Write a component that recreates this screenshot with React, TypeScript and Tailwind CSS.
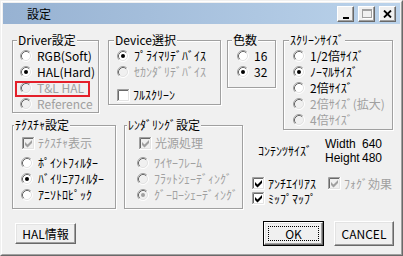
import React from 'react';

// classic win32 dialog, half-width kana labels

const FONT = { fontFamily: '"Noto Sans CJK JP", "Liberation Sans", sans-serif' };
const LATIN = { fontFamily: '"Liberation Sans", "Noto Sans CJK JP", sans-serif' };

function Radio({ on, off }: { on?: boolean; off?: boolean }) {
  return (
    <svg width="12" height="12" viewBox="0 0 12 12" className="shrink-0">
      <circle cx="6" cy="6" r="5" fill={off ? '#f0f0f0' : '#fff'} />
      <path d="M2.11 9.89A5.5 5.5 0 0 1 9.89 2.11" stroke="#a0a0a0" fill="none" />
      <path d="M9.89 2.11A5.5 5.5 0 0 1 2.11 9.89" stroke="#fff" fill="none" />
      <path d="M2.82 9.18A4.5 4.5 0 0 1 9.18 2.82" stroke="#696969" fill="none" />
      <path d="M9.18 2.82A4.5 4.5 0 0 1 2.82 9.18" stroke="#e3e3e3" fill="none" />
      {on && <circle cx="6" cy="6" r="2" fill={off ? '#a0a0a0' : '#000'} />}
    </svg>
  );
}

function Check({ on, off }: { on?: boolean; off?: boolean }) {
  return (
    <svg width="13" height="13" viewBox="0 0 13 13" className="shrink-0">
      <rect x="1" y="1" width="11" height="11" fill={off ? '#f0f0f0' : '#fff'} />
      <path d="M0.5 12 V0.5 H12" stroke="#a0a0a0" fill="none" />
      <path d="M1.5 11 V1.5 H11" stroke="#696969" fill="none" />
      <path d="M0 12.5 H12.5 V0" stroke="#fff" fill="none" />
      <path d="M1 11.5 H11.5 V1" stroke="#e3e3e3" fill="none" />
      {on && <polygon points="3,5 5.5,7.5 10,3 10,6 5.5,10.5 3,8" fill={off ? '#a0a0a0' : '#000'} />}
    </svg>
  );
}

function RadioRow({ label, on, off }: { label: string; on?: boolean; off?: boolean }) {
  return (
    <div className={`flex h-[16px] items-center gap-[5px] whitespace-nowrap ${off ? 'text-[#a0a0a0]' : 'text-black'}`}>
      <Radio on={on} off={off} />
      <span className="leading-[14px]">{label}</span>
    </div>
  );
}

function CheckRow({ label, on, off, className = '' }: { label: string; on?: boolean; off?: boolean; className?: string }) {
  return (
    <div className={`flex h-[16px] items-center gap-[3px] whitespace-nowrap ${off ? 'text-[#a0a0a0]' : 'text-black'} ${className}`}>
      <Check on={on} off={off} />
      <span className="leading-[14px]">{label}</span>
    </div>
  );
}

function Group({ title, className, titleLeft = 'left-[4px]', children }: { title: string; className: string; titleLeft?: string; children: React.ReactNode }) {
  return (
    <div className={`relative shrink-0 border border-[#a0a0a0] shadow-[inset_1px_1px_0_#fff,1px_1px_0_#fff] ${className}`}>
      <span className={`absolute top-[-8px] ${titleLeft} bg-[#f0f0f0] px-[1px] leading-[14px] whitespace-nowrap`}>{title}</span>
      {children}
    </div>
  );
}

function Button({ label, className = '', isDefault }: { label: string; className?: string; isDefault?: boolean }) {
  const face = (
    <div className="relative flex h-full w-full items-center justify-center border border-t-white border-l-white border-r-[#696969] border-b-[#696969] bg-[#f0f0f0] shadow-[inset_-1px_-1px_0_#a0a0a0,inset_1px_1px_0_#e3e3e3]">
      {isDefault && <span className="absolute inset-[3px] border border-dotted border-black" />}
      <span className="relative leading-[14px]">{label}</span>
    </div>
  );
  if (isDefault) return <div className={`border border-black ${className}`}>{face}</div>;
  return <div className={className}>{face}</div>;
}

function CaptionButton({ children }: { children: React.ReactNode }) {
  return (
    <div className="flex h-[16px] w-[17px] items-center justify-center border border-t-white border-l-white border-r-[#696969] border-b-[#696969] bg-[#f0f0f0] shadow-[inset_-1px_-1px_0_#a0a0a0]">
      {children}
    </div>
  );
}

export default function App() {
  return (
    <div className="text-[12px] text-black" style={FONT}>
      <div className="relative h-[256px] w-[403px] border border-t-[#f0f0f0] border-l-[#f0f0f0] border-r-[#696969] border-b-[#696969] bg-[#f0f0f0]">
        <div className="flex h-full w-full flex-col border border-t-white border-l-white border-r-[#a0a0a0] border-b-[#a0a0a0] p-[1px]">
          {/* title bar */}
          <div className="flex h-[21px] shrink-0 items-center bg-gradient-to-r from-[#97b2d2] to-[#bbd3eb] pl-[24px] pr-[4px]">
            <span className="text-[12px] leading-[14px] text-black">設定</span>
            <div className="ml-auto flex items-center gap-[4px]">
              <CaptionButton>
                <span className="mt-[8px] h-[2px] w-[6px] bg-black" />
              </CaptionButton>
              <CaptionButton>
                <span className="h-[9px] w-[10px] border border-t-2 border-[#a0a0a0] shadow-[1px_1px_0_#fff]" />
              </CaptionButton>
              <CaptionButton>
                <svg width="9" height="8" viewBox="0 0 9 8">
                  <path d="M1 0.5 L8 7.5 M8 0.5 L1 7.5" stroke="#000" strokeWidth="1.8" />
                </svg>
              </CaptionButton>
            </div>
          </div>

          {/* client */}
          <div className="flex flex-1 flex-col pl-[9px] pr-[6px] pt-[16px]">
            <div className="flex items-start">
              <Group title="Driver設定" className="w-[87px] pl-[7px] pt-[7px]">
                <RadioRow label="RGB(Soft)" />
                <RadioRow label="HAL(Hard)" on />
                <RadioRow label="T&L HAL" off />
                <RadioRow label="Reference" off />
              </Group>
              <Group title="Device選択" titleLeft="left-[5px]" className="ml-[9px] w-[113px] pl-[8px] pt-[7px] pb-[1px]">
                <RadioRow label="ﾌﾟﾗｲﾏﾘﾃﾞﾊﾞｲｽ" on />
                <RadioRow label="ｾｶﾝﾀﾞﾘﾃﾞﾊﾞｲｽ" off />
                <CheckRow label="ﾌﾙｽｸﾘｰﾝ" className="mt-[7px]" />
              </Group>
              <Group title="色数" className="ml-[6px] w-[49px] pl-[9px] pt-[7px] pb-[7px]">
                <RadioRow label="16" />
                <RadioRow label="32" on />
              </Group>
              <Group title="ｽｸﾘｰﾝｻｲｽﾞ" titleLeft="left-[5px]" className="ml-[7px] w-[110px] pl-[9px] pt-[7px] pb-[1px]">
                <RadioRow label="1/2倍ｻｲｽﾞ" />
                <RadioRow label="ﾉｰﾏﾙｻｲｽﾞ" on />
                <RadioRow label="2倍ｻｲｽﾞ" />
                <RadioRow label="2倍ｻｲｽﾞ(拡大)" off />
                <RadioRow label="4倍ｻｲｽﾞ" off />
              </Group>
            </div>

            <div className="mt-[-5px] flex items-start">
              <Group title="ﾃｸｽﾁｬ設定" titleLeft="left-[1px]" className="w-[104px] pl-[8px] pt-[9px] pb-[5px]">
                <CheckRow label="ﾃｸｽﾁｬ表示" on off className="pl-[1px]" />
                <div className="mt-[4px]">
                  <RadioRow label="ﾎﾟｲﾝﾄﾌｨﾙﾀｰ" />
                  <RadioRow label="ﾊﾞｲﾘﾆｱﾌｨﾙﾀｰ" on />
                  <RadioRow label="ｱﾆｿﾄﾛﾋﾟｯｸ" />
                </div>
              </Group>
              <Group title="ﾚﾝﾀﾞﾘﾝｸﾞ設定" titleLeft="left-[2px]" className="ml-[8px] w-[119px] pl-[12px] pt-[9px] pb-[5px]">
                <CheckRow label="光源処理" on off className="pl-[2px]" />
                <div className="mt-[4px]">
                  <RadioRow label="ﾜｲﾔｰﾌﾚｰﾑ" off />
                  <RadioRow label="ﾌﾗｯﾄｼｪｰﾃﾞｨﾝｸﾞ" off />
                  <RadioRow label="ｸﾞｰﾛｰｼｪｰﾃﾞｨﾝｸﾞ" on off />
                </div>
              </Group>
              <div className="ml-[9px] flex flex-1 flex-col">
                <div className="mt-[12px] flex items-center">
                  <span className="ml-[6px] w-[67px] whitespace-nowrap leading-[14px]">ｺﾝﾃﾝﾂｻｲｽﾞ</span>
                  <div className="grid grid-cols-[37px_auto] text-[12px] leading-[14px] whitespace-nowrap" style={LATIN}>
                    <span>Width</span>
                    <span>640</span>
                    <span>Height</span>
                    <span>480</span>
                  </div>
                </div>
                <div className="mt-[11px] flex h-[15px] items-center">
                  <Check on />
                  <span className="ml-[3px] w-[60px] whitespace-nowrap leading-[14px]">ｱﾝﾁｴｲﾘｱｽ</span>
                  <div className="flex items-center gap-[3px] whitespace-nowrap text-[#a0a0a0]">
                    <Check on off />
                    <span className="leading-[14px]">ﾌｫｸﾞ効果</span>
                  </div>
                </div>
                <div className="flex h-[15px] items-center">
                  <Check on />
                  <span className="ml-[3px] whitespace-nowrap leading-[14px]">ﾐｯﾌﾟﾏｯﾌﾟ</span>
                </div>
              </div>
            </div>

            <div className="mt-[12px] flex h-[25px] items-center">
              <Button label="HAL情報" className="ml-[3px] h-[21px] w-[61px]" />
              <Button label="OK" isDefault className="ml-auto h-[25px] w-[61px]" />
              <Button label="CANCEL" className="ml-[10px] h-[25px] w-[60px]" />
            </div>
          </div>
        </div>

        {/* red highlight annotation */}
        <div className="pointer-events-none absolute left-[14px] top-[80px] h-[16px] w-[75px] border-2 border-[#e4202a]" />
      </div>
    </div>
  );
}
